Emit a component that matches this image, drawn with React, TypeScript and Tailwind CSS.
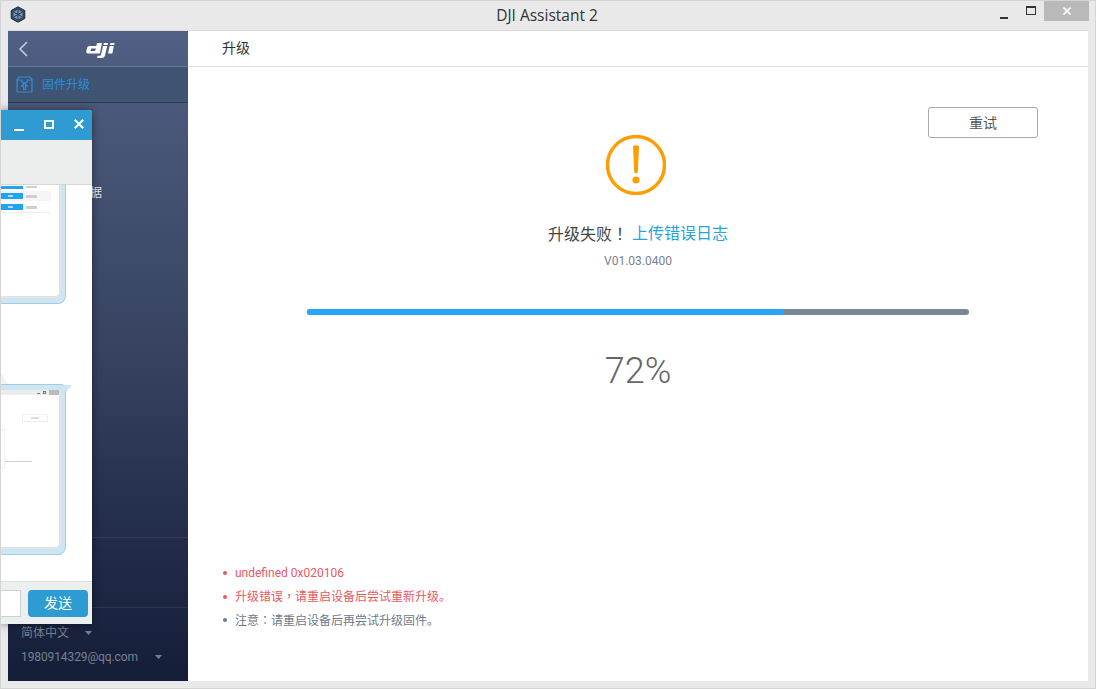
const cjk = "font-['Roboto','Noto_Sans_CJK_SC',sans-serif]";
const tc = "font-['Noto_Sans_CJK_TC',sans-serif]";

function Bubble({ className, children }: { className: string; children: React.ReactNode }) {
  return (
    <div className={`absolute left-0 w-[66px] bg-[#cde6f4] border border-l-0 border-[#a9c9e3] rounded-br-[8px] rounded-tr-[5px] pt-[5px] pr-[4px] pb-[5px] ${className}`}>
      <div className="h-full bg-white border-r-[2px] border-b-[2px] border-[#e3e3e3] rounded-br-[6px] overflow-hidden relative">{children}</div>
    </div>
  );
}

function Overlay() {
  return (
    <div className={`absolute left-[-1px] top-[109px] w-[92px] h-[514px] bg-white rounded-tr-[3px] shadow-[0_0_8px_rgba(0,0,0,0.45)] flex flex-col overflow-hidden ${cjk}`}>
      <div className="h-[30px] shrink-0 bg-[#2e9bd3] flex items-center justify-end gap-[20px] pr-[8px]">
        <svg width="10" height="10" viewBox="0 0 10 10" className="mt-[3px]"><rect x="0" y="7" width="10" height="2" fill="#fff" /></svg>
        <svg width="10" height="9" viewBox="0 0 10 9" className="mb-[2px]"><rect x="1" y="1" width="8" height="7" fill="none" stroke="#fff" strokeWidth="2" /></svg>
        <svg width="10" height="10" viewBox="0 0 10 10" className="mb-[2px]"><path d="M0.8 0.8 9.2 9.2M9.2 0.8 0.8 9.2" stroke="#fff" strokeWidth="2" /></svg>
      </div>
      <div className="h-[45px] shrink-0 bg-[#eceeee] border-b border-[#d6d8d8]" />
      <div className="relative flex-1 bg-white overflow-hidden">
        <Bubble className="top-[-40px] h-[159px]">
          <div className="absolute left-0 top-[35px] w-[23px] h-[3px] bg-[#1fa4f4]" />
          <div className="absolute left-[26px] top-[35px] w-[11px] h-[2px] bg-[#cfcfcf]" />
          <div className="absolute left-0 top-[40px] w-[51px] h-[10px] bg-[#f5f5f5]" />
          <div className="absolute left-0 top-[42px] w-[23px] h-[6px] bg-[#1fa4f4]" />
          <div className="absolute left-[8px] top-[44px] w-[5px] h-[2px] bg-[#a9dcfb]" />
          <div className="absolute left-[26px] top-[44px] w-[11px] h-[3px] bg-[#cfcfcf]" />
          <div className="absolute left-0 top-[53px] w-[23px] h-[6px] bg-[#1fa4f4]" />
          <div className="absolute left-[8px] top-[55px] w-[5px] h-[2px] bg-[#a9dcfb]" />
          <div className="absolute left-[26px] top-[55px] w-[11px] h-[3px] bg-[#cfcfcf]" />
          <div className="absolute left-0 top-[61px] w-[51px] h-[1px] bg-[#eeeeee]" />
        </Bubble>
        <Bubble className="top-[199px] h-[171px]">
          <div className="h-[5px] bg-[#ececec] relative">
            <div className="absolute right-0 top-0 w-[10px] h-[5px] bg-[#bbbbbb]" />
            <div className="absolute right-[13px] top-[1px] w-[3px] h-[3px] border border-[#777]" />
            <div className="absolute right-[19px] top-[3px] w-[3px] h-[1px] bg-[#777]" />
          </div>
          <div className="absolute left-[22px] top-[24px] w-[26px] h-[8px] border border-[#eeeeee] rounded-[1px]" />
          <div className="absolute left-[31px] top-[27px] w-[8px] h-[2px] bg-[#dddddd]" />
          <div className="absolute left-0 top-[39px] w-[5px] h-[39px] border border-l-0 border-[#eeeeee] rounded-r-[2px]" />
          <div className="absolute left-[5px] top-[71px] w-[27px] h-[1px] bg-[#c5d3de]" />
        </Bubble>
        <svg className="absolute left-[63px] top-[199px]" width="9" height="9" viewBox="0 0 9 9"><path d="M0 1H9L3 8Z" fill="#cde6f4" /></svg>
        <svg className="absolute left-0 top-[185px]" width="9" height="14" viewBox="0 0 9 14"><path d="M0 0 8 14H0Z" fill="#f1f3f5" /></svg>
      </div>
      <div className="h-[43px] shrink-0 bg-[#ecefef] border-t border-[#dddfdf] flex items-center justify-between pr-[4px]">
        <div className="w-[21px] h-[27px] bg-white border border-l-0 border-[#cfcfcf]" />
        <div className="w-[60px] h-[27px] rounded-[4px] bg-[#2e9bd3] text-white text-[14px] flex items-center justify-center">发送</div>
      </div>
    </div>
  );
}

function Sidebar() {
  return (
    <aside className={`relative w-[180px] shrink-0 bg-gradient-to-b from-[#515f84] via-[#36425f] to-[#141d38] flex flex-col ${cjk}`}>
      <div className="h-[36px] shrink-0 flex items-center relative border-b border-[#66769a]">
        <svg width="10" height="16" viewBox="0 0 10 16" className="ml-[10px]"><path d="M9 1 2 8l7 7" fill="none" stroke="#c5cbd8" strokeWidth="1.6" /></svg>
        <svg width="30" height="15" viewBox="0 0 30 15" className="absolute left-[78px] top-[12px]">
          <path fillRule="evenodd" d="M11 0h5L13.8 10.5H2Q0 10.5 0.3 8.5L1 5Q1.5 3 3.5 3H10.4ZM5.2 5.6 4.5 8H9.2L9.8 5.6Z" fill="#fff" />
          <path d="M17 3h4.2L19 12.5Q18.4 15 15.8 15H11L11.6 12.8H13.8Q14.8 12.8 15 11.8Z" fill="#fff" />
          <path d="M17.9 0h4.2L21.7 2H17.5Z" fill="#fff" />
          <path d="M23.6 3h4.2L26.3 10.5H22Z" fill="#fff" />
          <path d="M24.4 0h4.2L28.2 2H24Z" fill="#fff" />
        </svg>
      </div>
      <div className="h-[36px] shrink-0 bg-[#3f5373] border-b border-[#2a3d57] flex items-center pl-[8px] gap-[9px]">
        <svg width="17" height="17" viewBox="0 0 17 17" fill="none" stroke="#2a8fdc" strokeWidth="1.2">
          <path d="M1 3.5 3 1h11l2 2.5V15a1 1 0 0 1-1 1H2a1 1 0 0 1-1-1Z" />
          <path d="M1 4h4.5a3 3 0 0 0 6 0H16" />
          <path d="M8.5 7 5.8 10H7.5v3.5h2V10h1.7Z" />
        </svg>
        <span className="text-[12px] text-[#2a8fdc]">固件升级</span>
      </div>
      <div className="flex-1 relative">
        <span className="absolute left-[82px] top-[82px] text-[12px] leading-[16px] text-[#e4e7ee]">据</span>
      </div>
      <div className="h-[70px] shrink-0 border-t border-[#353f59]" />
      <div className="h-[74px] shrink-0 border-t border-[#2d3750] pl-[13px] text-[12px] text-[#76808f]">
        <div className="h-[25px] mt-[12px] flex items-center">
          <span>简体中文</span>
          <svg width="7" height="4" viewBox="0 0 7 4" className="ml-[16px]"><path d="M0 0h7L3.5 4Z" fill="#76808f" /></svg>
        </div>
        <div className="h-[24px] flex items-center">
          <span className="tracking-[-0.1px]">1980914329@qq.com</span>
          <svg width="7" height="4" viewBox="0 0 7 4" className="ml-[17px]"><path d="M0 0h7L3.5 4Z" fill="#76808f" /></svg>
        </div>
      </div>
    </aside>
  );
}

function Main() {
  return (
    <main className={`flex-1 bg-white flex flex-col ${cjk}`}>
      <div className="h-[36px] shrink-0 border-b border-[#dedede] flex items-center pl-[34px] text-[14px] text-[#333]">升级</div>
      <div className="flex-1 flex flex-col relative">
        <div className="flex justify-end pr-[50px] pt-[40px]">
          <div className="w-[110px] h-[31px] pt-[1px] border border-[#a9a9a9] rounded-[3px] flex items-center justify-center text-[14px] text-[#555]">重试</div>
        </div>
        <div className="flex justify-center -mt-[3px] pr-[4px]">
          <svg width="60" height="60" viewBox="0 0 60 60">
            <circle cx="30" cy="30" r="28.5" fill="none" stroke="#ff9c00" strokeWidth="3.4" />
            <path d="M27 11.5Q27 10.5 28 10.5H32Q33 10.5 33 11.5L31.8 37Q31.8 38 30.8 38H29.2Q28.2 38 28.2 37Z" fill="#ff9c00" />
            <circle cx="30" cy="45" r="3.6" fill="#ff9c00" />
          </svg>
        </div>
        <div className="mt-[28px] h-[22px] flex justify-center items-center text-[16px] text-[#444]">
          <span>升级失败<span className={tc}>！</span></span>
          <span className="ml-[4px] text-[#25a5dc]">上传错误日志</span>
        </div>
        <div className="mt-[8px] text-center text-[12px] leading-[16px] text-[#7a8193]">V01.03.0400</div>
        <div className="mt-[40px] mx-[119px] h-[6px] rounded-full bg-[#7b8794] overflow-hidden">
          <div className="w-[72%] h-full bg-[#27a5f6]" />
        </div>
        <div className="mt-[34px] text-center text-[36px] leading-[44px] font-light text-[#666]">72%</div>
        <ul className="absolute left-[35px] top-[494px] text-[12px]">
          <li className="h-[24px] flex items-center text-[#e9585f]"><i className="w-[4px] h-[4px] rounded-full bg-[#e9585f] mr-[8px]" />undefined 0x020106</li>
          <li className="h-[23.5px] flex items-center text-[#e9585f]"><i className="w-[4px] h-[4px] rounded-full bg-[#e9585f] mr-[8px]" /><span>升级错误<span className={tc}>，</span>请重启设备后尝试重新升级。</span></li>
          <li className="h-[23px] flex items-center text-[#6c7a8c]"><i className="w-[4px] h-[4px] rounded-full bg-[#6c7a8c] mr-[8px]" /><span>注意<span className={tc}>：</span>请重启设备后再尝试升级固件。</span></li>
        </ul>
      </div>
    </main>
  );
}

export default function App() {
  return (
    <div className="relative w-[1096px] h-[689px] overflow-hidden bg-[#e9e9e9] border border-[#d4d4d4] flex flex-col">
      <header className="h-[29px] shrink-0 relative flex items-center justify-center font-['Open_Sans',sans-serif] text-[15.5px] text-[#333]">
        <svg width="16" height="17" viewBox="0 0 16 17" className="absolute left-[9px] top-[5px]">
          <path d="M8 .8 14.8 4.5v8L8 16.2 1.2 12.5v-8Z" fill="#2d4a63" stroke="#1d2f44" />
          <path d="M8 3.5 12.5 6v5L8 13.5 3.5 11V6Z" fill="#7f97ae" />
          <path d="M8 3.5v10M3.5 6 12.5 11M12.5 6 3.5 11" stroke="#22384f" strokeWidth="1" />
        </svg>
        <span className="mr-[2px]">DJI Assistant 2</span>
        <div className="absolute right-[6px] top-0 h-[20px] flex items-center">
          <svg width="8" height="10" viewBox="0 0 8 10" className="mr-[18px] mt-[5px]"><rect x="0" y="8" width="8" height="2" fill="#333" /></svg>
          <svg width="10" height="9" viewBox="0 0 10 9" className="mr-[8px] mb-[1px]"><rect x=".5" y=".5" width="9" height="8" fill="none" stroke="#333" /><rect x="0" y="0" width="10" height="2" fill="#333" /></svg>
          <div className="w-[45px] h-[20px] bg-[#b9b9b9] flex items-center justify-center">
            <svg width="8" height="8" viewBox="0 0 8 8"><path d="M.5.5l7 7M7.5.5l-7 7" stroke="#fff" strokeWidth="1.6" /></svg>
          </div>
        </div>
      </header>
      <div className="flex-1 flex pl-[7px] pr-[7px] pb-[7px] min-h-0">
        <div className="flex-1 flex border-t border-[#dcdcdc] min-w-0">
          <Sidebar />
          <Main />
        </div>
      </div>
      <Overlay />
    </div>
  );
}
